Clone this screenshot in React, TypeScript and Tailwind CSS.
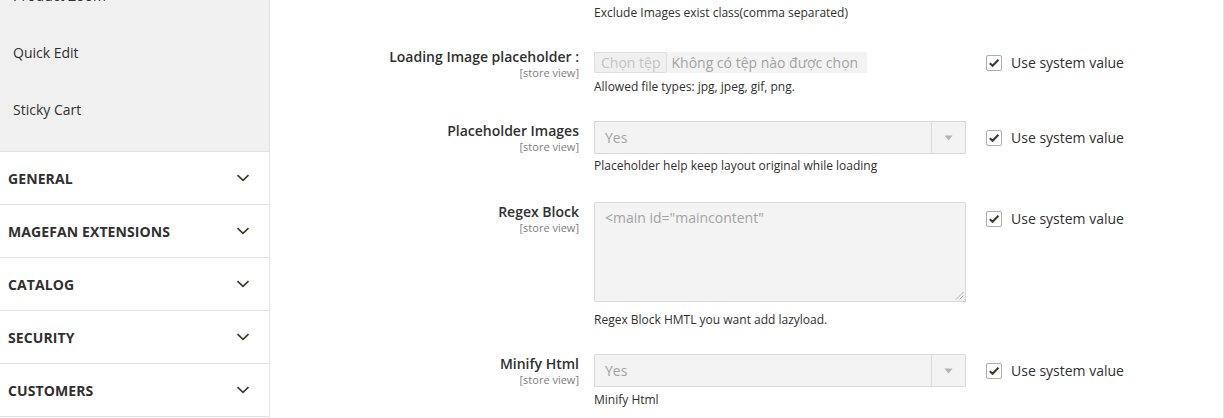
import React from "react";

const font = { fontFamily: '"Open Sans", "Noto Sans", sans-serif' };

function Chevron() {
  return (
    <svg width="14" height="8" viewBox="0 0 14 8" className="mr-[19px]">
      <path d="M1.5 1.2 L7 6.3 L12.5 1.2" fill="none" stroke="#41362f" strokeWidth="1.6" />
    </svg>
  );
}

function Check() {
  return (
    <span className="flex h-[16px] w-[16px] items-center justify-center rounded-[2px] border border-[#adadad] bg-white">
      <svg width="12" height="10" viewBox="0 0 12 10">
        <path d="M1.8 5.2 L4.6 7.8 L10.4 1.8" fill="none" stroke="#41362f" strokeWidth="2" />
      </svg>
    </span>
  );
}

function UseSystem({ mt }: { mt: string }) {
  return (
    <div className={`ml-[20px] ${mt} flex items-center`}>
      <Check />
      <span className="ml-[9px] text-[14px] leading-[16px] text-[#303030]">Use system value</span>
    </div>
  );
}

function Label({ text }: { text: string }) {
  return (
    <div className="w-[309px] pt-[1px] text-right">
      <div className="text-[14px] font-semibold leading-[18px] text-[#303030]">{text}</div>
      <div className="text-[11px] leading-[14px] text-[#808080]">[store view]</div>
    </div>
  );
}

function Note({ text, mt }: { text: string; mt: string }) {
  return <div className={`${mt} text-[12px] leading-[16px] text-[#303030]`}>{text}</div>;
}

function Select() {
  return (
    <div className="flex h-[33px] w-[372px] items-stretch border border-[#d9d9d9] bg-[#f3f3f3]">
      <div className="flex flex-1 items-center pl-[10px] text-[14px] text-[#a3a3a3]">Yes</div>
      <div className="flex w-[34px] items-center justify-center border-l border-[#dcdcdc]">
        <svg width="9" height="6" viewBox="0 0 9 6">
          <path d="M0.5 0.5 L8.5 0.5 L4.5 5.5 Z" fill="#b3b3b3" />
        </svg>
      </div>
    </div>
  );
}

export default function App() {
  return (
    <div className="flex h-[418px] w-[1224px] overflow-hidden bg-white" style={font}>
      {/* Sidebar */}
      <div className="flex w-[270px] shrink-0 flex-col border-r border-[#e3e3e3]">
        <div className="h-[152px] shrink-0 overflow-hidden border-b border-[#e3e3e3] bg-[#f0f0f0]">
          <div className="-mt-[33px] flex flex-col">
            {["Product Zoom", "Quick Edit", "Sticky Cart"].map((t) => (
              <div key={t} className="flex h-[57px] items-center pl-[13px] text-[14px] text-[#303030]">
                {t}
              </div>
            ))}
          </div>
        </div>
        {["GENERAL", "MAGEFAN EXTENSIONS", "CATALOG", "SECURITY", "CUSTOMERS"].map((t) => (
          <div
            key={t}
            className="flex h-[53px] shrink-0 items-center justify-between border-b border-[#e3e3e3] pl-[8px]"
          >
            <span className="text-[14px] font-bold tracking-[0.1px] text-[#303030]">{t}</span>
            <Chevron />
          </div>
        ))}
      </div>

      {/* Main */}
      <div className="flex flex-1 flex-col border-r border-[#e3e3e3] pt-[5px]">
        <div className="flex">
          <div className="w-[309px]" />
          <div className="ml-[15px]">
            <Note text="Exclude Images exist class(comma separated)" mt="mt-0" />
          </div>
        </div>

        <div className="mt-[26px] flex items-start">
          <Label text="Loading Image placeholder :" />
          <div className="ml-[15px] w-[372px]">
            <div className="mt-[5px] flex h-[21px] w-[273px] items-center bg-[#f3f3f3]">
              <span className="flex h-[21px] items-center rounded-[2px] border border-[#dedede] bg-[#f0f0f0] px-[6px] text-[14px] text-[#c4c4c4]">
                Chọn tệp
              </span>
              <span className="ml-[4px] text-[14px] text-[#a3a3a3]">Không có tệp nào được chọn</span>
            </div>
            <Note text="Allowed file types: jpg, jpeg, gif, png." mt="mt-[6px]" />
          </div>
          <UseSystem mt="mt-[8px]" />
        </div>

        <div className="mt-[26px] flex items-start">
          <Label text="Placeholder Images" />
          <div className="ml-[15px] w-[372px]">
            <Select />
            <Note text="Placeholder help keep layout original while loading" mt="mt-[4px]" />
          </div>
          <UseSystem mt="mt-[9px]" />
        </div>

        <div className="mt-[28px] flex items-start">
          <Label text="Regex Block" />
          <div className="ml-[15px] w-[372px]">
            <div className="relative h-[100px] w-[372px] border border-[#d9d9d9] bg-[#f3f3f3] px-[10px] pt-[5px] text-[14px] leading-[20px] text-[#a3a3a3]">
              {'<main id="maincontent"'}
              <svg className="absolute bottom-[1px] right-[1px]" width="9" height="9" viewBox="0 0 9 9">
                <path d="M8.5 1 L1 8.5 M8.5 4.5 L4.5 8.5" stroke="#b0b0b0" strokeWidth="1" />
              </svg>
            </div>
            <Note text="Regex Block HMTL you want add lazyload." mt="mt-[10px]" />
          </div>
          <UseSystem mt="mt-[9px]" />
        </div>

        <div className="mt-[26px] flex items-start">
          <Label text="Minify Html" />
          <div className="ml-[15px] w-[372px]">
            <Select />
            <Note text="Minify Html" mt="mt-[5px]" />
          </div>
          <UseSystem mt="mt-[9px]" />
        </div>
      </div>
    </div>
  );
}
